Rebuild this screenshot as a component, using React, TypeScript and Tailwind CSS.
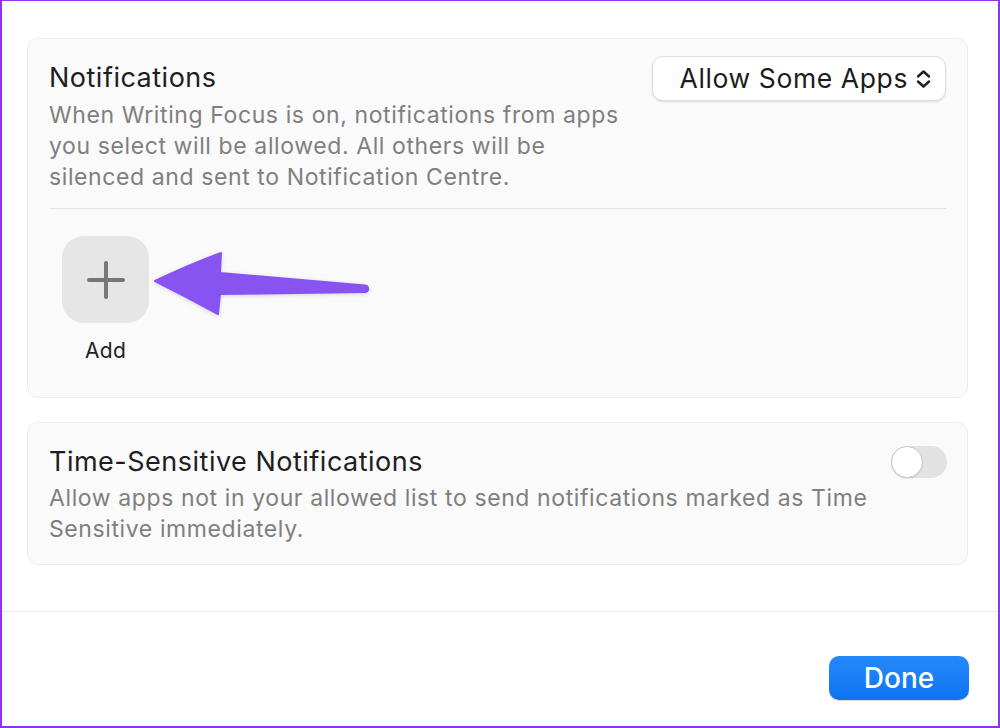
import React from "react";

const font = { fontFamily: 'Inter, "Noto Sans", "Liberation Sans", sans-serif' };

function UpDownChevron() {
  return (
    <svg width="17" height="20" viewBox="0 0 17 20" fill="none" stroke="#1f1f1f" strokeWidth="2.4" strokeLinecap="round" strokeLinejoin="round">
      <path d="M3 7.5 L8.5 2.5 L14 7.5" />
      <path d="M3 12.5 L8.5 17.5 L14 12.5" />
    </svg>
  );
}

function Arrow() {
  return (
    <svg
      className="absolute left-[123px] top-[210px]"
      width="222"
      height="72"
      viewBox="0 0 222 72"
      style={{ filter: "drop-shadow(0 1px 2px rgba(0,0,0,0.15))" }}
    >
      <path
        d="M4 32 Q 40 15 70 4 L 69 24 L 214 36.5 A 3.2 3.2 0 0 1 214 43 L 69 45 L 67 65 Q 36 48 4 32 Z"
        fill="#8754f2"
        stroke="#8754f2"
        strokeWidth="2"
        strokeLinejoin="round"
      />
    </svg>
  );
}

export default function App() {
  return (
    <div
      className="w-[1000px] h-[728px] bg-white border-2 border-[#9430ef] border-t-[1px] flex flex-col overflow-hidden"
      style={font}
    >
      <div className="pl-[25px] pr-[30px] pt-[37px] flex flex-col gap-[24px]">
        {/* Card 1 */}
        <div className="relative rounded-[11px] border border-[#ececec] bg-[#fafafa] px-[21px] pt-[17px] pb-[34px]">
          <div className="flex justify-between items-start">
            <div className="pt-[5px]">
              <div className="text-[27px] leading-[34px] text-[#1e1e1e] tracking-[0.5px]">Notifications</div>
              <div className="mt-[5px] text-[23px] leading-[31px] text-[#7f7f7f] tracking-[0.6px] whitespace-nowrap">
                When Writing Focus is on, notifications from apps
                <br />
                you select will be allowed. All others will be
                <br />
                silenced and sent to Notification Centre.
              </div>
            </div>
            <div className="h-[45px] w-[294px] rounded-[11px] bg-white border border-[#dedede] shadow-[0_1px_2px_rgba(0,0,0,0.12)] flex items-center justify-end pr-[13px] gap-[7px]">
              <span className="text-[26.5px] text-[#1c1c1c] leading-none tracking-[0.6px]">Allow Some Apps</span>
              <UpDownChevron />
            </div>
          </div>
          <div className="mt-[15px] h-px bg-[#e4e4e4]" />
          <div className="mt-[27px] ml-[13px] flex flex-col items-center w-[87px]">
            <div className="w-[87px] h-[87px] rounded-[22px] bg-[#e6e6e6] flex items-center justify-center">
              <svg width="38" height="38" viewBox="0 0 38 38" stroke="#777777" strokeWidth="4" strokeLinecap="round">
                <path d="M19 2 V36" />
                <path d="M2 19 H36" />
              </svg>
            </div>
            <div className="mt-[16px] text-[21px] leading-[24px] text-[#222] tracking-[0.3px]">Add</div>
          </div>
          <Arrow />
        </div>

        {/* Card 2 */}
        <div className="rounded-[11px] border border-[#ececec] bg-[#fafafa] pl-[21px] pr-[20px] pt-[22px] pb-[19px] flex justify-between items-start">
          <div>
            <div className="text-[27px] leading-[34px] text-[#1e1e1e] tracking-[0.5px]">Time-Sensitive Notifications</div>
            <div className="mt-[4px] text-[23px] leading-[31px] text-[#7f7f7f] tracking-[0.6px] whitespace-nowrap">
              Allow apps not in your allowed list to send notifications marked as Time
              <br />
              Sensitive immediately.
            </div>
          </div>
          <div className="mt-px w-[56px] h-[32px] rounded-full bg-[#e2e2e2] flex items-center">
            <div className="w-[32px] h-[32px] rounded-full bg-white border border-[#c9c9c9] shadow-[0_1px_1px_rgba(0,0,0,0.1)]" />
          </div>
        </div>
      </div>

      <div className="mt-[46px] h-px bg-[#ededed]" />

      <div className="flex justify-end pr-[29px] pt-[44px]">
        <div className="w-[140px] h-[44px] rounded-[10px] bg-gradient-to-b from-[#2489fc] to-[#0f73f0] flex items-center justify-center shadow-[0_1px_1px_rgba(0,0,0,0.15)]">
          <span className="text-white text-[28px] font-medium leading-none">Done</span>
        </div>
      </div>
    </div>
  );
}
